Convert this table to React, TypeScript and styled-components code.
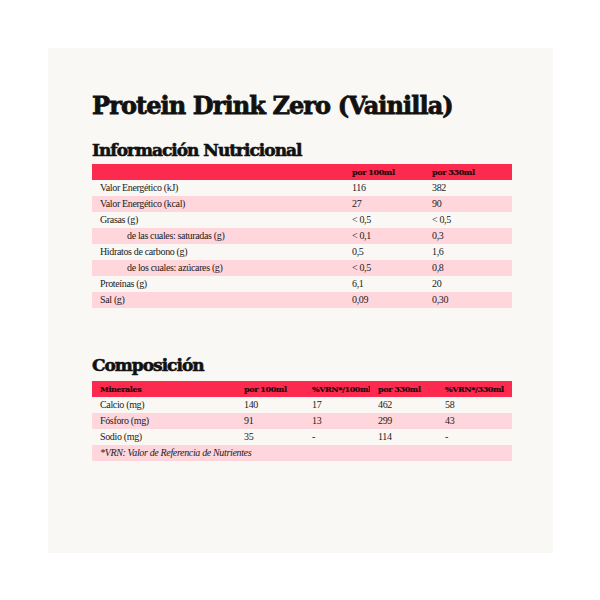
import React from "react";
import styled, { createGlobalStyle } from "styled-components";

const Global = createGlobalStyle`
  html, body { margin: 0; padding: 0; background: #ffffff; }
`;

const Panel = styled.div`
  margin: 48px 0 0 48px;
  width: 505px;
  height: 505px;
  background: #faf8f4;
  box-sizing: border-box;
  padding: 42px 0 0 44px;
  font-family: "DejaVu Serif", serif;
  color: #1a1a1a;
`;

const Title = styled.h1`
  margin: 0;
  font-family: "DejaVu Serif", serif;
  font-weight: 900;
  font-size: 24px;
  line-height: 32px;
  letter-spacing: -0.9px;
  color: #111;
  -webkit-text-stroke: 0.8px #111;
`;

const Subtitle = styled.h2<{ $top: number; $bottom: number }>`
  margin: ${(p) => p.$top}px 0 ${(p) => p.$bottom}px 0;
  font-family: "DejaVu Serif", serif;
  font-weight: 900;
  font-size: 17px;
  line-height: 22px;
  letter-spacing: -1px;
  color: #111;
  -webkit-text-stroke: 0.6px #111;
`;

const Table = styled.div<{ $cols: string }>`
  width: 420px;
  display: grid;
  grid-template-columns: ${(p) => p.$cols};
`;

const Cell = styled.div<{ $head?: boolean; $pink?: boolean; $indent?: boolean; $span?: boolean }>`
  height: 16px;
  line-height: 16px;
  padding-left: ${(p) => (p.$indent ? 35 : 8)}px;
  font-family: "Liberation Serif", serif;
  font-size: 10px;
  letter-spacing: -0.35px;
  white-space: nowrap;
  background: ${(p) => (p.$head ? "#fd2a4f" : p.$pink ? "#ffd6db" : "transparent")};
  font-weight: ${(p) => (p.$head ? 700 : 400)};
  color: ${(p) => (p.$head ? "#1f070c" : "#222")};
  ${(p) => (p.$head ? "font-family: 'DejaVu Serif', serif; font-size: 8px; letter-spacing: -0.4px; -webkit-text-stroke: 0.2px #1f070c;" : "")}
  ${(p) => (p.$span ? "grid-column: 1 / -1; font-style: italic;" : "")}
`;

const nutr: [string, string, string, boolean][] = [
  ["Valor Energético (kJ)", "116", "382", false],
  ["Valor Energético (kcal)", "27", "90", false],
  ["Grasas (g)", "< 0,5", "< 0,5", false],
  ["de las cuales: saturadas (g)", "< 0,1", "0,3", true],
  ["Hidratos de carbono (g)", "0,5", "1,6", false],
  ["de los cuales: azúcares (g)", "< 0,5", "0,8", true],
  ["Proteínas (g)", "6,1", "20", false],
  ["Sal (g)", "0,09", "0,30", false],
];

const minerals: string[][] = [
  ["Calcio (mg)", "140", "17", "462", "58"],
  ["Fósforo (mg)", "91", "13", "299", "43"],
  ["Sodio (mg)", "35", "-", "114", "-"],
];

export default function App() {
  return (
    <>
      <Global />
      <Panel>
        <Title>Protein Drink Zero (Vainilla)</Title>
        <Subtitle $top={17} $bottom={3}>Información Nutricional</Subtitle>
        <Table $cols="252px 80px 88px">
          <Cell $head />
          <Cell $head>por 100ml</Cell>
          <Cell $head>por 330ml</Cell>
          {nutr.map(([l, a, b, ind], i) => (
            <React.Fragment key={l}>
              <Cell $pink={i % 2 === 1} $indent={ind}>{l}</Cell>
              <Cell $pink={i % 2 === 1}>{a}</Cell>
              <Cell $pink={i % 2 === 1}>{b}</Cell>
            </React.Fragment>
          ))}
        </Table>
        <Subtitle $top={46} $bottom={5}>Composición</Subtitle>
        <Table $cols="144px 68px 66px 67px 75px">
          <Cell $head>Minerales</Cell>
          <Cell $head>por 100ml</Cell>
          <Cell $head>%VRN*/100ml</Cell>
          <Cell $head>por 330ml</Cell>
          <Cell $head>%VRN*/330ml</Cell>
          {minerals.map((r, i) =>
            r.map((v, j) => (
              <Cell key={`${i}-${j}`} $pink={i % 2 === 1}>{v}</Cell>
            ))
          )}
          <Cell $pink $span>*VRN: Valor de Referencia de Nutrientes</Cell>
        </Table>
      </Panel>
    </>
  );
}
